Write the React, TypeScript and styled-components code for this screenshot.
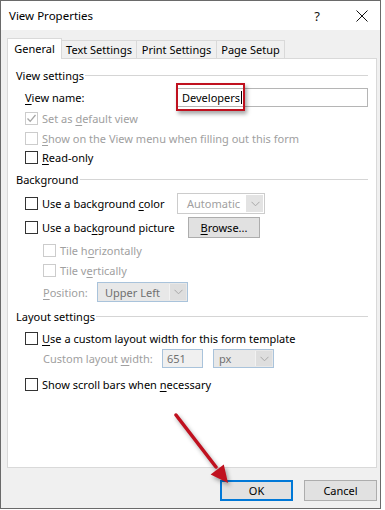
import React from "react";
import styled, { createGlobalStyle, css } from "styled-components";

const Global = createGlobalStyle`
  html, body { margin: 0; padding: 0; background: #fff; }
  body {
    font-family: "Noto Sans", "Segoe UI", sans-serif;
    font-size: 11px;
    color: #000;
  }
`;

const Dialog = styled.div`
  position: relative;
  width: 381px;
  height: 509px;
  box-sizing: border-box;
  border: 1px solid #6a6a6a;
  display: flex;
  flex-direction: column;
  background: #f0f0f0;
`;

const TitleBar = styled.div`
  height: 29px;
  flex: none;
  background: #fff;
  display: flex;
  align-items: center;
  padding-left: 8px;
`;

const Title = styled.div`
  flex: 1;
  font-size: 11.5px;
`;

const TitleButton = styled.div<{ $gap?: number }>`
  width: 36px;
  height: 29px;
  display: flex;
  align-items: center;
  justify-content: center;
  margin-right: ${(p) => p.$gap ?? 0}px;
  font-size: 13px;
  color: #111;
`;

const Body = styled.div`
  flex: 1;
  display: flex;
  flex-direction: column;
  padding: 8px 3px 0 6px;
`;

const Tabs = styled.div`
  display: flex;
  align-items: flex-end;
  height: 20px;
  position: relative;
  z-index: 1;
`;

const Tab = styled.div<{ $w: number; $active?: boolean }>`
  width: ${(p) => p.$w}px;
  box-sizing: border-box;
  border: 1px solid #d9d9d9;
  border-bottom: none;
  display: flex;
  align-items: center;
  justify-content: center;
  margin-left: -1px;
  &:first-child { margin-left: 0; }
  ${(p) =>
    p.$active
      ? css`
          height: 21px;
          margin-bottom: -1px;
          background: #fff;
          padding-bottom: 2px;
        `
      : css`
          height: 18px;
          background: #f0f0f0;
        `}
`;

const Panel = styled.div`
  width: 370px;
  height: 410px;
  box-sizing: border-box;
  border: 1px solid #d9d9d9;
  background: #fff;
  padding: 5px 8px 0 8px;
  display: flex;
  flex-direction: column;
`;

const Heading = styled.div<{ $h: number }>`
  height: ${(p) => p.$h}px;
  display: flex;
  align-items: center;
  &::after {
    content: "";
    flex: 1;
    height: 1px;
    background: #d5d5d5;
    margin-left: 1px;
  }
`;

const Row = styled.div<{ $h: number; $indent?: number }>`
  height: ${(p) => p.$h}px;
  display: flex;
  align-items: center;
  padding-left: ${(p) => p.$indent ?? 9}px;
`;

const Lead = styled.div<{ $w: number }>`
  width: ${(p) => p.$w}px;
  flex: none;
  display: flex;
  align-items: center;
`;

const Text = styled.span<{ $dim?: boolean }>`
  color: ${(p) => (p.$dim ? "#a0a0a0" : "#000")};
  white-space: nowrap;
`;

const Key = styled.span`
  text-decoration: underline;
  text-underline-offset: 2px;
`;

const Box = styled.span<{ $dim?: boolean }>`
  width: 13px;
  height: 13px;
  box-sizing: border-box;
  flex: none;
  border: 1px solid ${(p) => (p.$dim ? "#cccccc" : "#333333")};
  background: #fff;
  margin-right: 4px;
  display: flex;
  align-items: center;
  justify-content: center;
`;

const TextBoxWrap = styled.div`
  position: relative;
  width: 191px;
  height: 19px;
  box-sizing: border-box;
  border: 1px solid #b5b5b5;
  display: flex;
  align-items: center;
  padding-left: 4px;
`;

const Caret = styled.span`
  display: inline-block;
  width: 1px;
  height: 13px;
  background: #000;
  vertical-align: middle;
  margin-left: 1px;
`;

const RedBox = styled.div`
  position: absolute;
  left: -2px;
  top: -6px;
  width: 69px;
  height: 28px;
  box-sizing: border-box;
  border: 2px solid #c0111f;
  box-shadow: 2px 3px 4px rgba(0, 0, 0, 0.35);
  pointer-events: none;
`;

const Select = styled.div<{ $w: number; $h: number; $tone: "white" | "gray" }>`
  width: ${(p) => p.$w}px;
  height: ${(p) => p.$h}px;
  box-sizing: border-box;
  display: flex;
  align-items: center;
  padding: 1px;
  ${(p) =>
    p.$tone === "white"
      ? css`
          border: 1px solid #cccccc;
          background: #fff;
          color: #a0a0a0;
        `
      : css`
          border: 1px solid #a9c3db;
          background: #e8e8e8;
          color: #707070;
        `}
`;

const SelectText = styled.span<{ $pad: number }>`
  flex: 1;
  padding-left: ${(p) => p.$pad}px;
  white-space: nowrap;
`;

const ArrowBox = styled.span<{ $tone: "white" | "gray" }>`
  width: 16px;
  align-self: stretch;
  display: flex;
  align-items: center;
  justify-content: center;
  background: ${(p) => (p.$tone === "white" ? "#e3e3e3" : "#dedede")};
  border-left: 1px solid ${(p) => (p.$tone === "white" ? "#e3e3e3" : "#f2f2f2")};
`;

const Input = styled.div<{ $w: number }>`
  width: ${(p) => p.$w}px;
  height: 19px;
  box-sizing: border-box;
  border: 1px solid #a9c3db;
  background: #f0f0f0;
  color: #707070;
  display: flex;
  align-items: center;
  padding-left: 4px;
  margin-right: 10px;
`;

const Button = styled.div<{ $w: number; $h: number; $primary?: boolean }>`
  width: ${(p) => p.$w}px;
  height: ${(p) => p.$h}px;
  box-sizing: border-box;
  background: #e1e1e1;
  border: ${(p) => (p.$primary ? "2px solid #0078d7" : "1px solid #adadad")};
  display: flex;
  align-items: center;
  justify-content: center;
  color: #000;
  flex: none;
`;

const Footer = styled.div`
  display: flex;
  justify-content: flex-end;
  gap: 11px;
  padding-top: 12px;
`;

const ArrowOverlay = styled.svg`
  position: absolute;
  left: 164px;
  top: 404px;
  width: 80px;
  height: 95px;
  overflow: visible;
  filter: drop-shadow(2px 3px 2px rgba(0, 0, 0, 0.35));
  pointer-events: none;
`;

const Chevron = () => (
  <svg width="9" height="6" viewBox="0 0 9 6">
    <path d="M0.5 0.8 L4.5 4.8 L8.5 0.8" fill="none" stroke="#a8a8a8" strokeWidth="1" />
  </svg>
);

const Check = ({ checked, dim }: { checked?: boolean; dim?: boolean }) => (
  <Box $dim={dim}>
    {checked && (
      <svg width="11" height="11" viewBox="0 0 11 11">
        <path d="M1.5 5.5 L4.2 8.3 L9.5 2" fill="none" stroke="#a5a5a5" strokeWidth="1.3" />
      </svg>
    )}
  </Box>
);

export default function App() {
  return (
    <>
      <Global />
      <Dialog>
        <TitleBar>
          <Title>View Properties</Title>
          <TitleButton $gap={9}>?</TitleButton>
          <TitleButton>
            <svg width="12" height="12" viewBox="0 0 12 12">
              <path d="M0.5 0.5 L11.5 11.5 M11.5 0.5 L0.5 11.5" stroke="#111" strokeWidth="1" />
            </svg>
          </TitleButton>
        </TitleBar>
        <Body>
          <Tabs>
            <Tab $w={55} $active>General</Tab>
            <Tab $w={76}>Text Settings</Tab>
            <Tab $w={81}>Print Settings</Tab>
            <Tab $w={69}>Page Setup</Tab>
          </Tabs>
          <Panel>
            <Heading $h={22}>View settings</Heading>
            <Row $h={23}>
              <Lead $w={152}>
                <Text><Key>V</Key>iew name:</Text>
              </Lead>
              <TextBoxWrap>
                <span>Developers</span>
                <Caret />
                <RedBox />
              </TextBoxWrap>
            </Row>
            <Row $h={19}>
              <Check checked dim />
              <Text $dim>Set as <Key>d</Key>efault view</Text>
            </Row>
            <Row $h={20}>
              <Check dim />
              <Text $dim><Key>S</Key>how on the View menu when filling out this form</Text>
            </Row>
            <Row $h={19}>
              <Check />
              <Text><Key>R</Key>ead-only</Text>
            </Row>
            <Heading $h={25}>Background</Heading>
            <Row $h={23}>
              <Lead $w={152}>
                <Check />
                <Text>Use a background <Key>c</Key>olor</Text>
              </Lead>
              <Select $w={88} $h={21} $tone="white">
                <SelectText $pad={8}>Automatic</SelectText>
                <ArrowBox $tone="white"><Chevron /></ArrowBox>
              </Select>
            </Row>
            <Row $h={25}>
              <Lead $w={163}>
                <Check />
                <Text>Use a bac<Key>k</Key>ground picture</Text>
              </Lead>
              <Button $w={72} $h={21}>
                <span><Key>B</Key>rowse...</span>
              </Button>
            </Row>
            <Row $h={21} $indent={27}>
              <Check dim />
              <Text $dim>Tile h<Key>o</Key>rizontally</Text>
            </Row>
            <Row $h={19} $indent={27}>
              <Check dim />
              <Text $dim>Tile v<Key>e</Key>rtically</Text>
            </Row>
            <Row $h={24} $indent={27}>
              <Lead $w={54}>
                <Text $dim><Key>P</Key>osition:</Text>
              </Lead>
              <Select $w={91} $h={20} $tone="gray">
                <SelectText $pad={6}>Upper Left</SelectText>
                <ArrowBox $tone="gray"><Chevron /></ArrowBox>
              </Select>
            </Row>
            <Heading $h={25}>Layout settings</Heading>
            <Row $h={19}>
              <Check />
              <Text><Key>U</Key>se a custom layout width for this form template</Text>
            </Row>
            <Row $h={21} $indent={27}>
              <Lead $w={119}>
                <Text $dim>Custom layout <Key>w</Key>idth:</Text>
              </Lead>
              <Input $w={41}>651</Input>
              <Select $w={61} $h={19} $tone="gray">
                <SelectText $pad={4}>px</SelectText>
                <ArrowBox $tone="gray"><Chevron /></ArrowBox>
              </Select>
            </Row>
            <Row $h={30}>
              <Check />
              <Text>Show scroll bars when <Key>n</Key>ecessary</Text>
            </Row>
          </Panel>
          <Footer>
            <Button $w={73} $h={21} $primary>OK</Button>
            <Button $w={73} $h={21}>Cancel</Button>
          </Footer>
        </Body>
        <ArrowOverlay viewBox="0 0 80 95">
          <path d="M11 10 L51 62" stroke="#c0111f" strokeWidth="3.5" strokeLinecap="round" />
          <path d="M63 78 L45.6 69.6 L58.8 59.4 Z" fill="#c0111f" />
        </ArrowOverlay>
      </Dialog>
    </>
  );
}
